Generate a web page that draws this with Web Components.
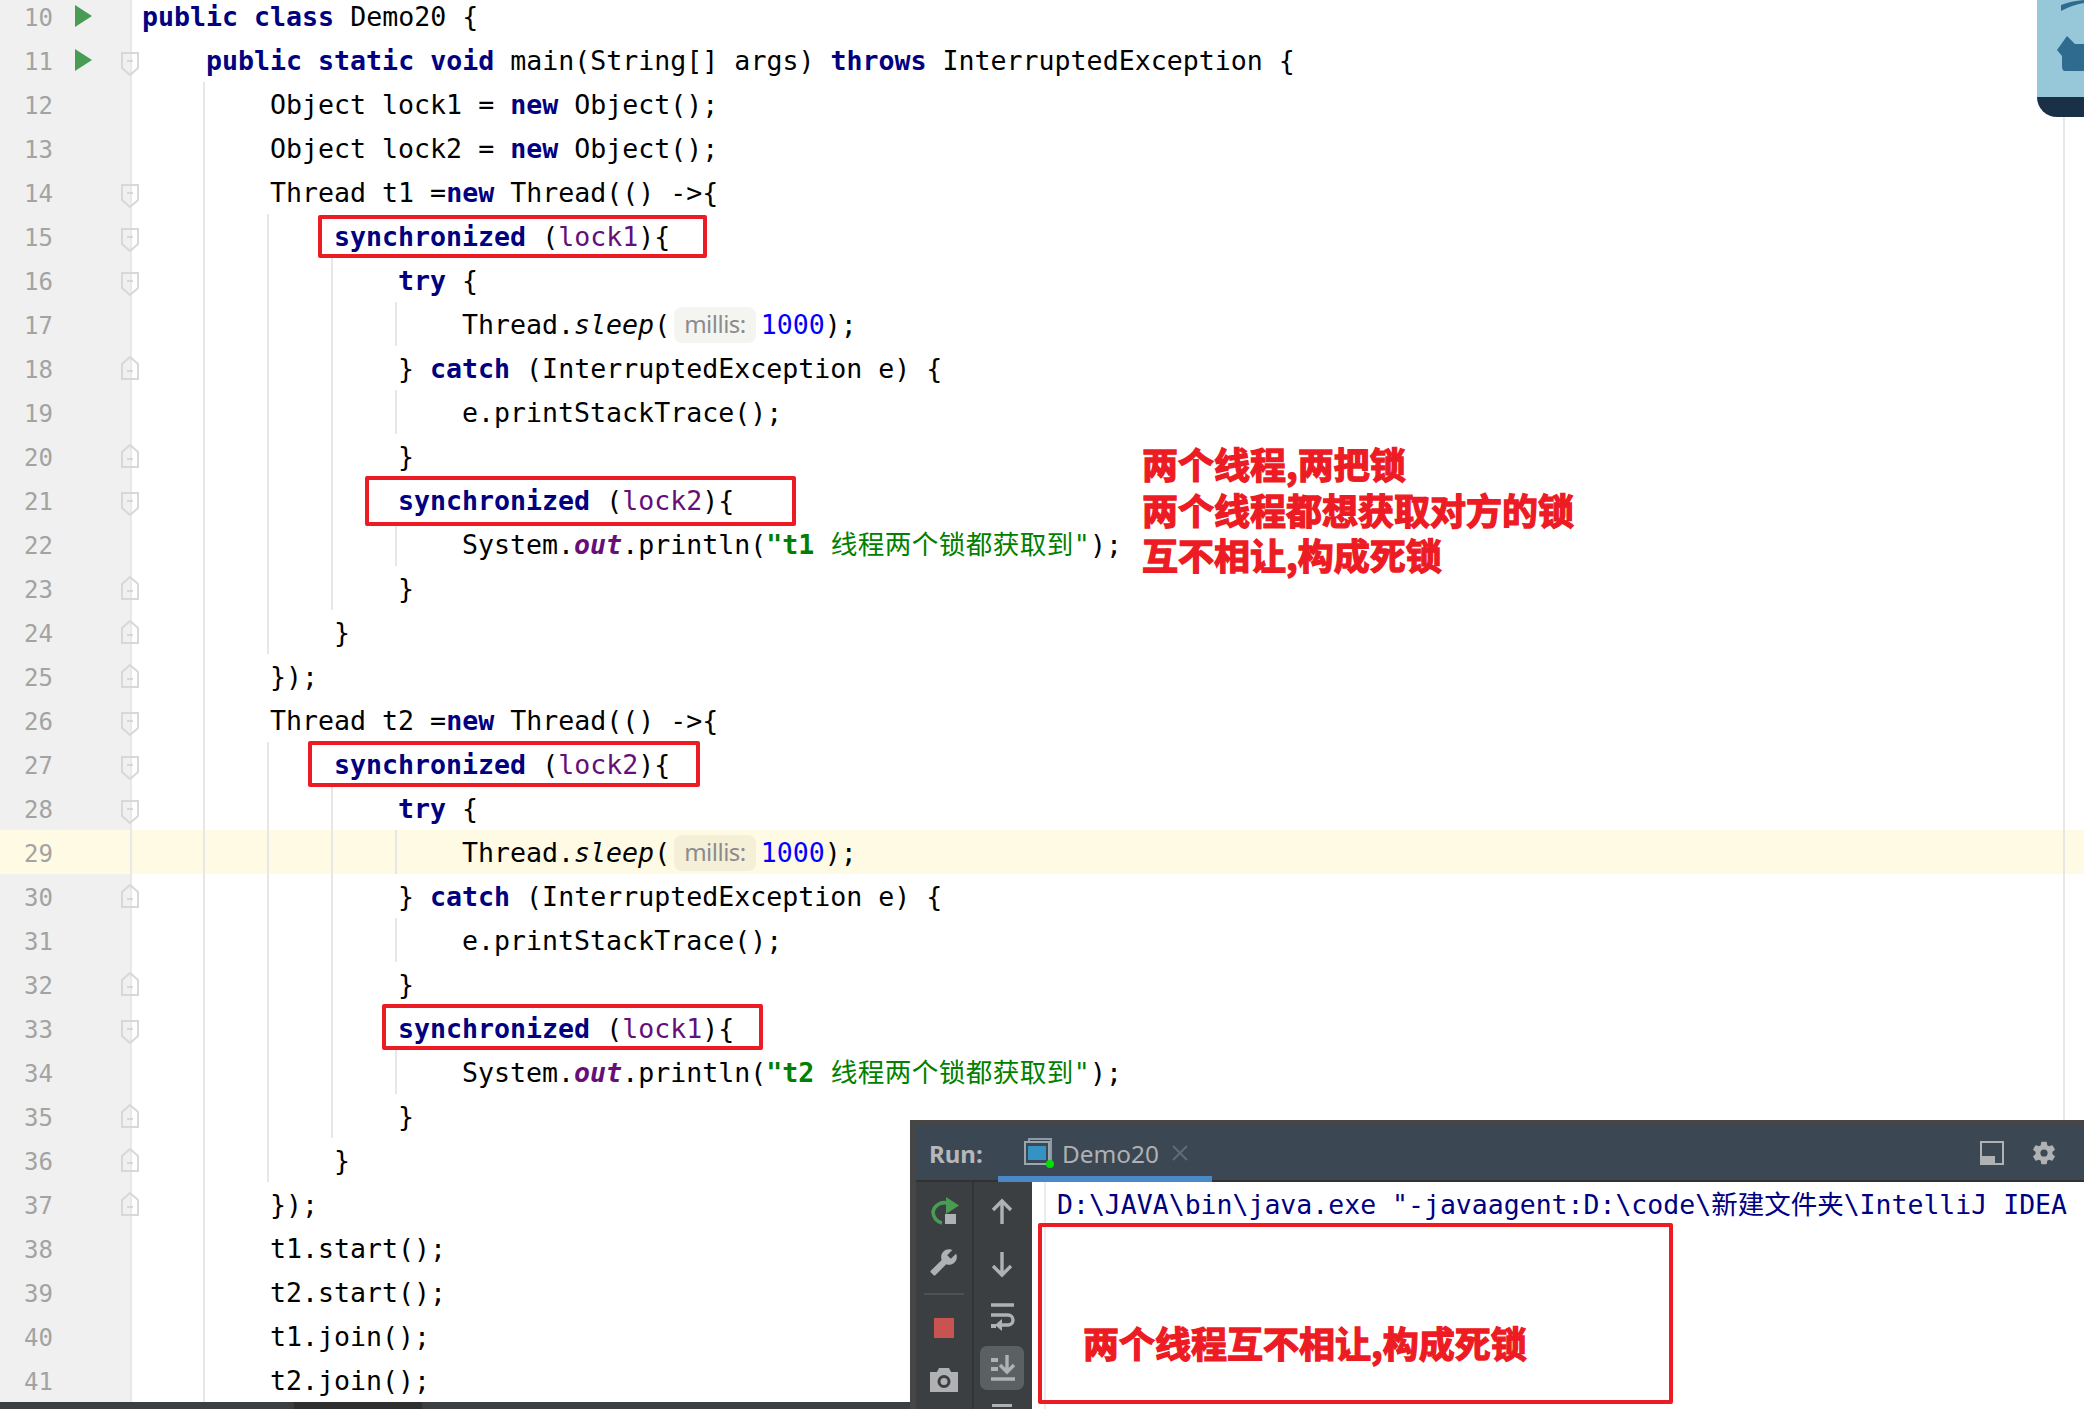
<!DOCTYPE html>
<html>
<head>
<meta charset="utf-8">
<title>Demo20</title>
<style>
  html, body { margin: 0; background: #fff; overflow: hidden; }
</style>
</head>
<body>
<ide-window>
  <code-line n="10" indent="0" run><b>public class</b> Demo20 {</code-line>
  <code-line n="11" indent="4" run fold="down"><b>public static void</b> main(String[] args) <b>throws</b> InterruptedException {</code-line>
  <code-line n="12" indent="8">Object lock1 = <b>new</b> Object();</code-line>
  <code-line n="13" indent="8">Object lock2 = <b>new</b> Object();</code-line>
  <code-line n="14" indent="8" fold="down">Thread t1 =<b>new</b> Thread(() -&gt;{</code-line>
  <code-line n="15" indent="12" fold="down"><b>synchronized</b> (<span class="var">lock1</span>){</code-line>
  <code-line n="16" indent="16" fold="down"><b>try</b> {</code-line>
  <code-line n="17" indent="20">Thread.<em>sleep</em>(<param-hint>millis:</param-hint><span class="num">1000</span>);</code-line>
  <code-line n="18" indent="16" fold="up">} <b>catch</b> (InterruptedException e) {</code-line>
  <code-line n="19" indent="20">e.printStackTrace();</code-line>
  <code-line n="20" indent="16" fold="up">}</code-line>
  <code-line n="21" indent="16" fold="down"><b>synchronized</b> (<span class="var">lock2</span>){</code-line>
  <code-line n="22" indent="20">System.<b class="field">out</b>.println(<b class="str">"t1</b><span class="cn"> 线程两个锁都获取到"</span>);</code-line>
  <code-line n="23" indent="16" fold="up">}</code-line>
  <code-line n="24" indent="12" fold="up">}</code-line>
  <code-line n="25" indent="8" fold="up">});</code-line>
  <code-line n="26" indent="8" fold="down">Thread t2 =<b>new</b> Thread(() -&gt;{</code-line>
  <code-line n="27" indent="12" fold="down"><b>synchronized</b> (<span class="var">lock2</span>){</code-line>
  <code-line n="28" indent="16" fold="down"><b>try</b> {</code-line>
  <code-line n="29" indent="20" current>Thread.<em>sleep</em>(<param-hint>millis:</param-hint><span class="num">1000</span>);</code-line>
  <code-line n="30" indent="16" fold="up">} <b>catch</b> (InterruptedException e) {</code-line>
  <code-line n="31" indent="20">e.printStackTrace();</code-line>
  <code-line n="32" indent="16" fold="up">}</code-line>
  <code-line n="33" indent="16" fold="down"><b>synchronized</b> (<span class="var">lock1</span>){</code-line>
  <code-line n="34" indent="20">System.<b class="field">out</b>.println(<b class="str">"t2</b><span class="cn"> 线程两个锁都获取到"</span>);</code-line>
  <code-line n="35" indent="16" fold="up">}</code-line>
  <code-line n="36" indent="12" fold="up">}</code-line>
  <code-line n="37" indent="8" fold="up">});</code-line>
  <code-line n="38" indent="8">t1.start();</code-line>
  <code-line n="39" indent="8">t2.start();</code-line>
  <code-line n="40" indent="8">t1.join();</code-line>
  <code-line n="41" indent="8">t2.join();</code-line>

  <red-box slot="over" x="318" y="215" w="389" h="43"></red-box>
  <red-box slot="over" x="365" y="476" w="431" h="50"></red-box>
  <red-box slot="over" x="308" y="741" w="392" h="46"></red-box>
  <red-box slot="over" x="382" y="1004" w="381" h="46"></red-box>

  <red-note slot="over" x="1142" y="440">两个线程,两把锁</red-note>
  <red-note slot="over" x="1142" y="486">两个线程都想获取对方的锁</red-note>
  <red-note slot="over" x="1142" y="531">互不相让,构成死锁</red-note>

  <run-panel slot="over">D:\JAVA\bin\java.exe "-javaagent:D:\code\新建文件夹\IntelliJ IDEA</run-panel>

  <red-box slot="over" x="1038" y="1223" w="635" h="181"></red-box>
  <red-note slot="over" x="1083" y="1319">两个线程互不相让,构成死锁</red-note>
</ide-window>

<script>
class IdeWindow extends HTMLElement {
  constructor() {
    super();
    this.attachShadow({ mode: "open" });
    this.shadowRoot.innerHTML = `
      <style>
        :host {
          display: flex;
          flex-direction: column;
          position: relative;
          width: 2084px;
          height: 1409px;
          overflow: hidden;
          background: #fff;
        }
        .editor { display: block; margin-top: -6px; flex: none; }
        .status { flex: 1; background: #3c3f41; display: flex; padding-left: 294px; }
        .status i { width: 128px; background: #2f2f2f; }
        .margin { position: absolute; left: 2063px; top: 0; width: 2px; height: 1120px; background: #e8e8e8; }
        .thumb {
          position: absolute; right: 0; top: 0; width: 47px; height: 117px;
          background: #96c8da; border-bottom: 20px solid #193047;
          box-sizing: border-box; border-bottom-left-radius: 20px; overflow: hidden;
        }
      </style>
      <div class="editor"><slot></slot></div>
      <div class="status"><i></i></div>
      <div class="margin"></div>
      <div class="thumb">
        <svg width="47" height="97" viewBox="0 0 47 97">
          <path d="M24 5 Q34 1 47 0 V3 Q35 5 24 11Z" fill="#2f6a8f"/>
          <path d="M20 50 L30 36 L38 44 H47 V71 H28 Q25 71 25 66 V56Z" fill="#2f6a8f"/>
        </svg>
      </div>
      <slot name="over"></slot>
    `;
  }
}

class CodeLine extends HTMLElement {
  constructor() {
    super();
    this.attachShadow({ mode: "open" });
  }

  connectedCallback() {
    const indent = Number(this.getAttribute("indent") || 0);
    const fold = this.getAttribute("fold");
    const guides = "<i></i>".repeat(indent / 4);
    const runIcon = this.hasAttribute("run")
      ? `<svg class="run" width="17" height="22" viewBox="0 0 17 22"><path d="M0 0L17 11L0 22Z" fill="#499c54"/></svg>`
      : "";
    let foldIcon = "";
    if (fold === "down") {
      foldIcon = `<svg class="fold d" width="18" height="24" viewBox="0 0 18 24"><path d="M1 1H17V16L9 23L1 16Z M6 9H12" fill="none" stroke="#d8d8d8" stroke-width="2"/></svg>`;
    } else if (fold === "up") {
      foldIcon = `<svg class="fold" width="18" height="24" viewBox="0 0 18 24"><path d="M1 23H17V8L9 1L1 8Z M6 15H12" fill="none" stroke="#d8d8d8" stroke-width="2"/></svg>`;
    }
    this.shadowRoot.innerHTML = `
      <style>
        :host {
          display: flex;
          height: 44px;
          font: 26.6px/44px "DejaVu Sans Mono", "Noto Sans CJK SC", monospace;
          color: #000;
        }
        :host([current]) { background: #fffae3; }
        .gutter {
          flex: none; width: 130px; height: 44px; position: relative;
          background: #f0f0f0; border-right: 2px solid #e8e8e8;
          display: flex; align-items: center;
        }
        :host([current]) .gutter { background: #fffae3; }
        .no { width: 53px; text-align: right; font-size: 24px; color: #a3a3a3; position: relative; top: 2px; }
        .run { margin-left: 22px; }
        .fold { position: absolute; left: 121px; top: 10px; }
        .fold.d { top: 14px; }
        .indent { display: flex; margin-left: 10px; }
        .indent i {
          display: block; width: 64px; height: 44px;
          background: linear-gradient(#e6e6e6, #e6e6e6) no-repeat 61px 0 / 2px 100%;
        }
        .indent i:last-child { background: none; }
        .text { white-space: pre; position: relative; top: 1px; }
        ::slotted(b) { color: #000080; font-weight: bold; }
        ::slotted(b.field) { color: #660e7a; font-style: italic; }
        ::slotted(b.str) { color: #008000; }
        ::slotted(em) { font-style: italic; }
        ::slotted(.var) { color: #660e7a; }
        ::slotted(.num) { color: #0000ff; }
        ::slotted(.cn) { color: #008000; letter-spacing: .4px; }
      </style>
      <div class="gutter">
        <span class="no">${this.getAttribute("n")}</span>${runIcon}${foldIcon}
      </div>
      <div class="indent">${guides}</div>
      <div class="text"><slot></slot></div>
    `;
  }
}

class ParamHint extends HTMLElement {
  constructor() {
    super();
    this.attachShadow({ mode: "open" });
    this.shadowRoot.innerHTML = `
      <style>
        :host {
          display: inline-block;
          height: 36px;
          margin: 0 5px 0 4px;
          padding: 0 10px;
          border-radius: 8px;
          background: rgba(60, 60, 0, 0.055);
          font: 24px/34px "Noto Sans", sans-serif;
          letter-spacing: -0.5px;
          color: #8c8c8c;
          white-space: nowrap;
          vertical-align: 1px;
        }
      </style>
      <slot></slot>
    `;
  }
}

class RedBox extends HTMLElement {
  constructor() {
    super();
    this.attachShadow({ mode: "open" });
    const a = (k) => this.getAttribute(k);
    this.shadowRoot.innerHTML = `
      <style>
        :host {
          display: block;
          position: absolute;
          left: ${a("x")}px; top: ${a("y")}px;
          width: ${a("w")}px; height: ${a("h")}px;
          box-sizing: border-box;
          border: 4px solid #ed1c24;
          border-radius: 2px;
        }
      </style>
    `;
  }
}

class RedNote extends HTMLElement {
  constructor() {
    super();
    this.attachShadow({ mode: "open" });
    const a = (k) => this.getAttribute(k);
    this.shadowRoot.innerHTML = `
      <style>
        :host {
          display: block;
          position: absolute;
          left: ${a("x")}px; top: ${a("y")}px;
          font: bold 36px/46px "Noto Sans CJK SC", sans-serif;
          color: #ed1c24;
          -webkit-text-stroke: 1.4px #ed1c24;
          white-space: nowrap;
        }
      </style>
      <slot></slot>
    `;
  }
}

const ICONS = {
  rerun: `<path d="M14 29A11.5 11.5 0 0 1 5 18A11.5 11.5 0 0 1 19 9" fill="none" stroke="#499c54" stroke-width="3.6"/><path d="M18 3L31 11.5L18 20Z" fill="#499c54"/><rect x="17" y="20" width="11" height="10" fill="#afb1b3"/>`,
  wrench: `<g transform="translate(30 2) scale(-1.2 1.2)"><path d="M22.7 19l-9.1-9.1c.9-2.3.4-5-1.5-6.9-2-2-5-2.4-7.4-1.3L9 6 6 9 1.6 4.7C.4 7.1.9 10.1 2.9 12.1c1.9 1.9 4.6 2.4 6.9 1.5l9.1 9.1c.4.4 1 .4 1.4 0l2.3-2.3c.5-.4.5-1.1.1-1.4z" fill="#afb1b3"/></g>`,
  stop: `<rect x="6" y="6" width="20" height="20" fill="#c75450"/>`,
  camera: `<path fill-rule="evenodd" d="M2 8H9L11 4H21L23 8H30V28H2ZM16 11A6.5 6.5 0 1 0 16 24A6.5 6.5 0 1 0 16 11ZM16 14A3.5 3.5 0 1 1 16 21A3.5 3.5 0 1 1 16 14Z" fill="#afb1b3"/>`,
  up: `<path d="M16 28V6M7 14L16 5L25 14" fill="none" stroke="#afb1b3" stroke-width="3.4"/>`,
  down: `<path d="M16 4V26M7 18L16 27L25 18" fill="none" stroke="#afb1b3" stroke-width="3.4"/>`,
  wrap: `<path d="M5 5H28M5 15H22A5 5 0 0 1 22 25H14" fill="none" stroke="#afb1b3" stroke-width="3.4"/><path d="M16 19L9 25L16 31Z" fill="#afb1b3"/><rect x="5" y="24" width="5" height="4" fill="#afb1b3"/>`,
  end: `<path d="M5 27H29M21 3V19M14 13L21 20L28 13" fill="none" stroke="#afb1b3" stroke-width="3.4"/><path d="M5 8H12M5 17H12" fill="none" stroke="#afb1b3" stroke-width="4"/>`,
  line: `<rect x="6" y="0" width="20" height="3" fill="#afb1b3"/>`
};

class IdeIcon extends HTMLElement {
  constructor() {
    super();
    this.attachShadow({ mode: "open" });
    this.shadowRoot.innerHTML = `
      <style>
        :host { display: flex; flex: none; align-items: center; justify-content: center; height: 52px; }
        svg { display: block; }
      </style>
      <svg width="32" height="32" viewBox="0 0 32 32">${ICONS[this.getAttribute("name")]}</svg>
    `;
  }
}

class RunPanel extends HTMLElement {
  constructor() {
    super();
    this.attachShadow({ mode: "open" });
    this.shadowRoot.innerHTML = `
      <style>
        :host {
          display: flex;
          flex-direction: column;
          position: absolute;
          left: 910px; top: 1120px; right: 0; bottom: 0;
          overflow: hidden;
          box-sizing: border-box;
          border-top: 6px solid #464646;
          border-left: 6px solid #464646;
          background: #fff;
        }
        header {
          flex: none; height: 56px; box-sizing: border-box;
          display: flex; align-items: flex-start;
          background: #3c4754;
          box-shadow: inset 0 -2px #323232;
          font-family: "Noto Sans", sans-serif;
        }
        .title { width: 82px; padding-left: 13px; box-sizing: border-box; font: bold 24px/56px "Noto Sans", sans-serif; color: #b5b7b9; }
        .tab {
          height: 56px; width: 214px; box-sizing: border-box;
          border-bottom: 6px solid #4a88c7;
          display: flex; align-items: center; padding-left: 26px;
          font-size: 24.4px; color: #afb1b3; line-height: 54px;
        }
        .tab span { position: relative; top: 3px; }
        .tab svg { flex: none; margin-right: 8px; margin-top: 4px; }
        .x { margin-left: 13px; }
        .tools { margin-left: auto; display: flex; align-items: center; gap: 26px; padding-right: 26px; height: 54px; }
        main { flex: 1; display: flex; min-height: 0; }
        .col { flex: none; background: #3c3f41; display: flex; flex-direction: column; }
        .a { width: 56px; padding-top: 2px; }
        .b { width: 60px; box-sizing: border-box; border-left: 2px solid #323436; padding: 4px 2px 0 0; }
        .sep { flex: none; height: 2px; margin: 5px 8px 7px; background: #515151; }
        .on {
          flex: none; width: 44px; height: 44px; margin: 4px 6px;
          background: #5b6163; border-radius: 7px;
        }
        .on ide-icon { height: 44px; }
        .console {
          flex: 1; min-width: 0; margin-left: 12px; padding-left: 11px;
          border-left: 2px solid #ececec;
          font: 26.5px/46px "DejaVu Sans Mono", "Noto Sans CJK SC", monospace;
          color: #000080; white-space: pre; overflow: hidden;
        }
      </style>
      <header>
        <div class="title">Run:</div>
        <div class="tab">
          <svg width="30" height="30" viewBox="0 0 30 30">
            <path d="M5 4V1H27V22H24" fill="none" stroke="#8d9aa4" stroke-width="2"/>
            <rect x="1" y="4" width="24" height="22" fill="#3c4754" stroke="#9aa6ae" stroke-width="2"/>
            <rect x="4" y="8" width="18" height="14" fill="#3592c4"/>
            <circle cx="26" cy="26" r="4" fill="#00e000"/>
          </svg>
          <span>Demo20</span>
          <svg class="x" width="16" height="16" viewBox="0 0 16 16"><path d="M1 1L15 15M15 1L1 15" stroke="#5f6c78" stroke-width="2"/></svg>
        </div>
        <div class="tools">
          <svg width="24" height="24" viewBox="0 0 24 24"><path d="M1 1H23V23H1Z" fill="none" stroke="#afb1b3" stroke-width="2"/><rect x="1" y="15" width="14" height="8" fill="#afb1b3"/></svg>
          <svg width="28" height="28" viewBox="0 0 24 24"><path fill="#afb1b3" d="M19.14 12.94c.04-.3.06-.61.06-.94 0-.32-.02-.64-.07-.94l2.03-1.58a.49.49 0 0 0 .12-.61l-1.92-3.32a.488.488 0 0 0-.59-.22l-2.39.96c-.5-.38-1.03-.7-1.62-.94l-.36-2.54a.484.484 0 0 0-.48-.41h-3.84c-.24 0-.43.17-.47.41l-.36 2.54c-.59.24-1.13.57-1.62.94l-2.39-.96c-.22-.08-.47 0-.59.22L2.74 8.87c-.12.21-.08.47.12.61l2.03 1.58c-.05.3-.09.63-.09.94s.02.64.07.94l-2.03 1.58a.49.49 0 0 0-.12.61l1.92 3.32c.12.22.37.29.59.22l2.39-.96c.5.38 1.03.7 1.62.94l.36 2.54c.05.24.24.41.48.41h3.84c.24 0 .44-.17.47-.41l.36-2.54c.59-.24 1.13-.56 1.62-.94l2.39.96c.22.08.47 0 .59-.22l1.92-3.32c.12-.22.07-.47-.12-.61l-2.01-1.58zM12 15.1a3.1 3.1 0 1 1 0-6.2 3.1 3.1 0 0 1 0 6.2z"/></svg>
        </div>
      </header>
      <main>
        <div class="col a">
          <ide-icon name="rerun"></ide-icon>
          <ide-icon name="wrench"></ide-icon>
          <div class="sep"></div>
          <ide-icon name="stop"></ide-icon>
          <ide-icon name="camera"></ide-icon>
        </div>
        <div class="col b">
          <ide-icon name="up"></ide-icon>
          <ide-icon name="down"></ide-icon>
          <ide-icon name="wrap"></ide-icon>
          <div class="on"><ide-icon name="end"></ide-icon></div>
          <ide-icon name="line"></ide-icon>
        </div>
        <div class="console"><slot></slot></div>
      </main>
    `;
  }
}

customElements.define("code-line", CodeLine);
customElements.define("param-hint", ParamHint);
customElements.define("red-box", RedBox);
customElements.define("red-note", RedNote);
customElements.define("ide-icon", IdeIcon);
customElements.define("run-panel", RunPanel);
customElements.define("ide-window", IdeWindow);
</script>
</body>
</html>
